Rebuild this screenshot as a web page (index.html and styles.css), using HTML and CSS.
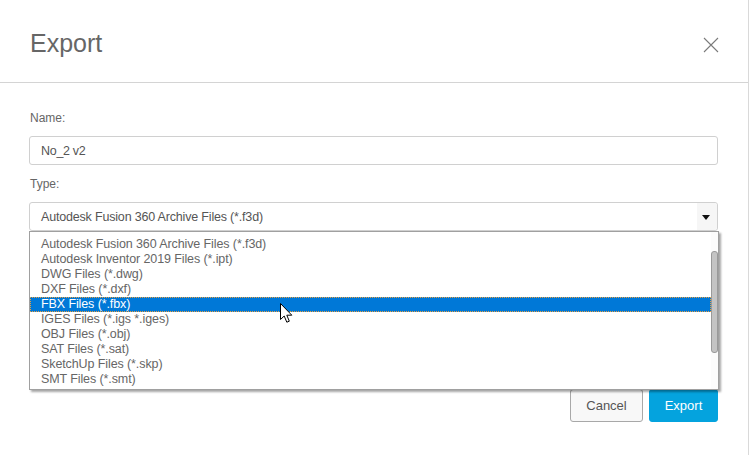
FILE: index.html
```html
<!DOCTYPE html>
<html>
<head>
<meta charset="utf-8">
<link rel="stylesheet" href="styles.css">
</head>
<body>
<div class="dialog">
  <div class="header">
    <h1 class="title">Export</h1>
    <button class="close" aria-label="Close">
      <svg width="16" height="16" viewBox="0 0 16 16"><path d="M1 1 L15 15 M15 1 L1 15" stroke="#7a7a7a" stroke-width="1.1" fill="none"/></svg>
    </button>
  </div>
  <div class="content">
    <label class="label first">Name:</label>
    <div class="input">No_2 v2</div>
    <label class="label">Type:</label>
    <div class="select-wrap">
      <div class="select">
        <span class="select-text">Autodesk Fusion 360 Archive Files (*.f3d)</span>
        <span class="select-arrow"><svg width="8" height="5" viewBox="0 0 8 5"><path d="M0 0 H8 L4 5 Z" fill="#111"/></svg></span>
      </div>
      <div class="dropdown">
        <ul class="options">
          <li>Autodesk Fusion 360 Archive Files (*.f3d)</li>
          <li>Autodesk Inventor 2019 Files (*.ipt)</li>
          <li>DWG Files (*.dwg)</li>
          <li>DXF Files (*.dxf)</li>
          <li class="selected">FBX Files (*.fbx)</li>
          <li>IGES Files (*.igs *.iges)</li>
          <li>OBJ Files (*.obj)</li>
          <li>SAT Files (*.sat)</li>
          <li>SketchUp Files (*.skp)</li>
          <li>SMT Files (*.smt)</li>
        </ul>
        <div class="scrollbar"><div class="thumb"></div></div>
      </div>
    </div>
    <div class="actions">
      <button class="btn cancel">Cancel</button>
      <button class="btn primary">Export</button>
    </div>
  </div>
  <svg class="cursor" width="14" height="21" viewBox="0 0 14 21"><path d="M0.5 0.5 L0.5 16.5 L4.2 13 L6.8 19.2 L9.3 18.2 L6.8 12.2 L11.8 12.2 Z" fill="#fff" stroke="#000" stroke-width="1" stroke-linejoin="miter"/></svg>
</div>
</body>
</html>
```
FILE: styles.css
```css
html, body {
  margin: 0;
  padding: 0;
  background: #fff;
}
body {
  font-family: "Liberation Sans", Arial, sans-serif;
}
.dialog {
  position: relative;
  width: 748px;
  height: 455px;
  border-right: 1px solid #d9d9d9;
  background: #fff;
}
.header {
  border-bottom: 1px solid #d4d4d4;
  display: flex;
  align-items: flex-start;
  justify-content: space-between;
  box-sizing: border-box;
  height: 83px;
  padding: 0 29px 0 30px;
}
.title {
  margin: 31px 0 0 0;
  font-size: 25px;
  line-height: 25px;
  font-weight: normal;
  color: #666;
}
.close {
  margin-top: 37px;
  padding: 0;
  border: 0;
  background: none;
  width: 16px;
  height: 16px;
  display: block;
}
.close svg { display: block; }
.content {
  padding: 28px 30px 0 29px;
  display: flex;
  flex-direction: column;
}
.label {
  display: block;
  font-size: 12px;
  line-height: 14px;
  color: #666;
  margin: 12px 0 11px 1px;
}
.label.first { margin-top: 0; }
.input {
  height: 29px;
  box-sizing: border-box;
  border: 1px solid #d0d0d0;
  border-radius: 3px;
  padding: 1px 11px 0 11px;
  font-size: 12.5px;
  line-height: 26px;
  color: #555;
  letter-spacing: -0.3px;
}
.select-wrap {
  position: relative;
}
.select {
  height: 29px;
  box-sizing: border-box;
  border: 1px solid #d0d0d0;
  border-radius: 3px;
  display: flex;
  align-items: stretch;
  justify-content: space-between;
  font-size: 12.5px;
  color: #555;
}
.select-text {
  padding: 2px 0 0 11px;
  line-height: 25px;
  letter-spacing: -0.18px;
}
.select-arrow {
  width: 20px;
  background: #f6f6f6;
  display: flex;
  align-items: center;
  justify-content: center;
  border-radius: 0 3px 3px 0;
}
.select-arrow svg { display: block; margin: 1px 0 0 -2px; }
.dropdown {
  position: absolute;
  left: 0;
  top: 29px;
  width: 690px;
  height: 159px;
  box-sizing: border-box;
  border: 1px solid #a0a0a0;
  background: #fff;
  box-shadow: 2px 2px 2px rgba(0, 0, 0, 0.35);
  display: flex;
  z-index: 2;
}
.options {
  list-style: none;
  margin: 0;
  padding: 5px 0 0 0;
  flex: 1;
}
.options li {
  height: 15px;
  line-height: 15px;
  font-size: 12.5px;
  color: #666;
  padding-left: 11px;
  white-space: nowrap;
  letter-spacing: -0.1px;
}
.options li.selected {
  background: #0078d7;
  color: #fff;
  outline: 1px dotted #e8a040;
  outline-offset: -1px;
}
.scrollbar {
  width: 7px;
  padding: 19px 0 0 0;
  background: #fcfcfc;
}
.thumb {
  width: 5px;
  height: 100px;
  border: 1px solid #9a9a9a;
  border-radius: 3px;
  background: #c4c4c4;
  box-sizing: content-box;
}
.actions {
  margin-top: 158px;
  display: flex;
  justify-content: flex-end;
  gap: 6px;
}
.btn {
  height: 33px;
  box-sizing: border-box;
  border-radius: 3px;
  font-family: "Liberation Sans", Arial, sans-serif;
  font-size: 13px;
  padding: 0;
}
.cancel {
  width: 73px;
  border: 1px solid #a8a8a8;
  background: #f8f8f8;
  color: #555;
}
.primary {
  width: 69px;
  border: 1px solid #04a3de;
  background: #04a3de;
  color: #fff;
}
.cursor {
  position: absolute;
  left: 280px;
  top: 303px;
  z-index: 3;
}
```
